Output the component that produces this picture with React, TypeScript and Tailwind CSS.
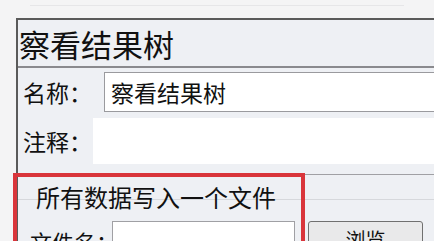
import React from 'react';

const cjk = { fontFamily: '"Noto Sans CJK SC", "Noto Sans", sans-serif' };

function App() {
  return (
    <div
      className="relative w-[434px] h-[241px] overflow-hidden bg-[#f4f4f5] text-[#111]"
      style={cjk}
    >
      {/* faint rule at the very top */}
      <div className="ml-[30px] mr-[30px] mt-[5px] h-px bg-[#e6e6e8]" />

      {/* Panel */}
      <div className="ml-[16px] mt-[12px] border-l-2 border-t-2 border-[#5a5a5a] bg-[#eef0f4]">
        {/* Title */}
        <div className="h-[48px] flex items-center pl-[1px] border-b-2 border-[#8a8a8e]">
          <span className="text-[31px] leading-none">察看结果树</span>
        </div>

        {/* 名称 */}
        <div className="h-[46px] flex items-center pt-[2px]">
          <span className="w-[86px] pl-[5px] text-[23px] leading-none">名称：</span>
          <div className="flex-1 h-[40px] bg-white border border-[#9a9a9e] border-r-0 flex items-center pl-[6px]">
            <span className="text-[23px] leading-none">察看结果树</span>
          </div>
        </div>

        {/* 注释 */}
        <div className="flex items-center pt-[4px]">
          <span className="w-[75px] pl-[5px] text-[23px] leading-none">注释：</span>
          <div className="flex-1 h-[46px] bg-white" />
        </div>

        {/* File section */}
        <div className="mt-[10px] border-t border-[#a0a0a4] bg-[#eef0f4]">
          <div className="h-[24px] flex items-end pl-[18px]">
            <span className="text-[24px] leading-none translate-y-[10px]">所有数据写入一个文件</span>
          </div>
          <div className="border-t border-[#d6d8dc] h-[22px]" />
          <div className="flex items-start">
            <span className="w-[94px] pl-[12px] pt-[9px] text-[22px] leading-none whitespace-nowrap">文件名：</span>
            <div className="w-[183px] h-[30px] bg-white border border-[#a0a0a4]" />
            <div className="ml-[13px] w-[115px] h-[30px] rounded-[3px] border border-[#707070] bg-[#e9e9ea] flex justify-center pt-[8px]">
              <span className="text-[20px] leading-none">浏览</span>
            </div>
          </div>
        </div>
      </div>

      {/* red highlight box */}
      <div className="absolute left-[13px] top-[173px] w-[292px] h-[80px] border-[4px] border-[#d9353b]" />
    </div>
  );
}

export default App;
